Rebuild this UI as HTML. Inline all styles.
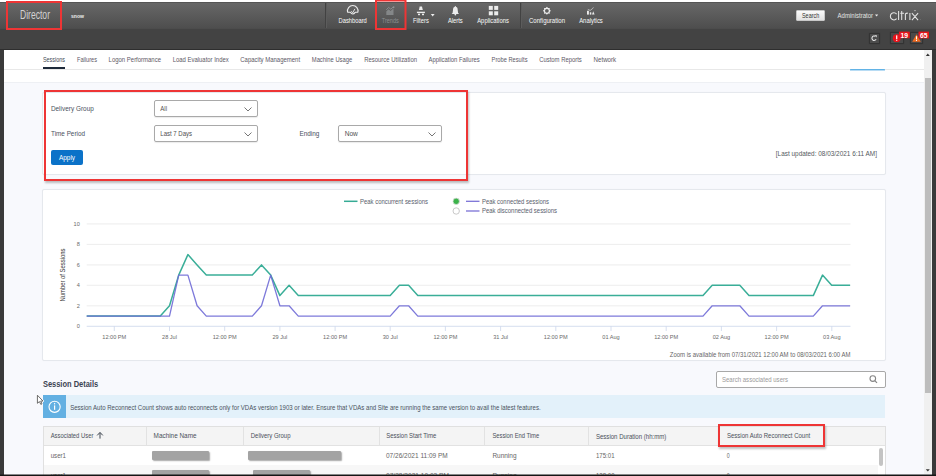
<!DOCTYPE html>
<html><head><meta charset="utf-8">
<style>
*{margin:0;padding:0;box-sizing:border-box}
html,body{width:936px;height:476px;overflow:hidden;background:#f8f9fd;font-family:"Liberation Sans",sans-serif;color:#3c4450}
.a{position:absolute}
#top{left:0;top:0;width:936px;height:2px;background:#fff}
#hb1{left:0;top:2px;width:936px;height:26px;background:linear-gradient(#676767,#4e4e4e);border-top:1px solid #555}
#hb2{left:0;top:28px;width:936px;height:22px;background:#434343;border-top:1px solid #4c4c4c;border-bottom:1px solid #2e2e2e}
#lb{left:0;top:50px;width:4px;height:426px;background:#3a3a3a}
#rb{left:932px;top:50px;width:4px;height:426px;background:#3a3a3a}
#bb{left:0;top:474px;width:936px;height:2px;background:#111}
#sb{left:924px;top:50px;width:8px;height:424px;background:#f0f0f0}
#sbt{left:925px;top:78px;width:6px;height:315px;background:#bdbdbd}
.sep{position:absolute;top:3px;width:2px;height:25px;border-left:1px solid #424242;border-right:1px solid #5c5c5c}
.red{position:absolute;border:2px solid #ee3535;box-shadow:1px 2px 2px rgba(0,0,0,.25)}
.card{position:absolute;background:#fff;border:1px solid #e5e8ed;border-radius:2px;box-shadow:0 0 1px rgba(0,0,0,.05)}
.dd{position:absolute;width:104px;height:17px;border:1px solid #a9a9a9;border-radius:2px;background:#fff;box-shadow:0 1px 1px rgba(0,0,0,.08)}
.dd svg{position:absolute;right:5px;top:6px}
.blur{position:absolute;background:#a3a3a3;border-radius:1px;box-shadow:1px 1px 1.5px rgba(0,0,0,.35)}
.vb{position:absolute;top:427px;width:1px;height:19px;background:#e2e2e2}
</style></head><body>
<div id="top" class="a"></div>
<div id="hb1" class="a"></div>
<div id="hb2" class="a"></div>

<div class="sep" style="left:325px"></div>
<div class="sep" style="left:520px"></div>

<!-- header right -->
<div class="a" style="left:796px;top:10px;width:29px;height:11px;background:linear-gradient(#fbfbfb,#e2e2e2);border:1px solid #c8c8c8;border-radius:1px"></div>
<div class="a" style="left:869px;top:33px;width:11px;height:11px;background:#4c4c4c;border:1px solid #333;border-radius:1px;box-shadow:0 0 1px #2a2a2a"></div>
<div class="a" style="left:890px;top:32px;width:14px;height:12px;background:#4a4a4a;border:1px solid #333;border-radius:1px;box-shadow:0 0 1px #2a2a2a"></div>
<div class="a" style="left:910px;top:32px;width:13px;height:12px;background:#4a4a4a;border:1px solid #333;border-radius:1px;box-shadow:0 0 1px #2a2a2a"></div>

<div id="lb" class="a"></div>
<div id="rb" class="a"></div>
<div id="sb" class="a"></div>
<div id="sbt" class="a"></div>

<!-- content -->
<div class="a" style="left:4px;top:50px;width:920px;height:32px;background:#fff"></div>
<div class="a" style="left:4px;top:69px;width:920px;height:1px;background:#e8e8e8"></div>
<div class="a" style="left:4px;top:82px;width:920px;height:1px;background:#eef0f4"></div>
<div class="a" style="left:850px;top:69px;width:35px;height:1px;background:#62b3e6;border-radius:1px"></div><div class="a" style="left:850px;top:70px;width:35px;height:1px;background:#b8dcf4"></div>
<div class="a" style="left:43px;top:67px;width:22px;height:2px;background:#1e2a3a"></div>

<!-- filter card -->
<div class="card" style="left:42px;top:92px;width:844px;height:83px"></div>
<div class="dd" style="left:154px;top:100px"><svg width="8" height="5" viewBox="0 0 8 5"><path d="M0.5 0.5 L4 4 L7.5 0.5" fill="none" stroke="#666" stroke-width="0.9"/></svg></div>
<div class="dd" style="left:154px;top:124.6px"><svg width="8" height="5" viewBox="0 0 8 5"><path d="M0.5 0.5 L4 4 L7.5 0.5" fill="none" stroke="#666" stroke-width="0.9"/></svg></div>
<div class="dd" style="left:338px;top:124.6px"><svg width="8" height="5" viewBox="0 0 8 5"><path d="M0.5 0.5 L4 4 L7.5 0.5" fill="none" stroke="#666" stroke-width="0.9"/></svg></div>
<div class="a" style="left:51px;top:150px;width:32px;height:15px;background:#0b72c8;border-radius:2px"></div>
<div class="red" style="left:44px;top:90px;width:424px;height:91px"></div>

<!-- chart card -->
<div class="card" style="left:42px;top:189px;width:844px;height:172px"></div>
<svg class="a" style="left:0;top:0" width="936" height="476" viewBox="0 0 936 476">
<line x1="86.7" x2="850.5" y1="305.8" y2="305.8" stroke="#e9e9e9" stroke-width="0.8"/>
<line x1="86.7" x2="850.5" y1="285.3" y2="285.3" stroke="#e9e9e9" stroke-width="0.8"/>
<line x1="86.7" x2="850.5" y1="264.9" y2="264.9" stroke="#e9e9e9" stroke-width="0.8"/>
<line x1="86.7" x2="850.5" y1="244.4" y2="244.4" stroke="#e9e9e9" stroke-width="0.8"/>
<line x1="86.7" x2="850.5" y1="223.9" y2="223.9" stroke="#e9e9e9" stroke-width="0.8"/>
<line x1="86.7" x2="850.5" y1="326.3" y2="326.3" stroke="#ccd6eb" stroke-width="0.8"/>
<line x1="114.3" x2="114.3" y1="326.3" y2="331" stroke="#ccd6eb" stroke-width="0.8"/>
<text x="114.3" y="339" text-anchor="middle" font-size="5.6" fill="#6a6a6a">12:00 PM</text>
<line x1="169.5" x2="169.5" y1="326.3" y2="331" stroke="#ccd6eb" stroke-width="0.8"/>
<text x="169.5" y="339" text-anchor="middle" font-size="5.6" fill="#6a6a6a">28 Jul</text>
<line x1="224.7" x2="224.7" y1="326.3" y2="331" stroke="#ccd6eb" stroke-width="0.8"/>
<text x="224.7" y="339" text-anchor="middle" font-size="5.6" fill="#6a6a6a">12:00 PM</text>
<line x1="279.9" x2="279.9" y1="326.3" y2="331" stroke="#ccd6eb" stroke-width="0.8"/>
<text x="279.9" y="339" text-anchor="middle" font-size="5.6" fill="#6a6a6a">29 Jul</text>
<line x1="335.1" x2="335.1" y1="326.3" y2="331" stroke="#ccd6eb" stroke-width="0.8"/>
<text x="335.1" y="339" text-anchor="middle" font-size="5.6" fill="#6a6a6a">12:00 PM</text>
<line x1="390.2" x2="390.2" y1="326.3" y2="331" stroke="#ccd6eb" stroke-width="0.8"/>
<text x="390.2" y="339" text-anchor="middle" font-size="5.6" fill="#6a6a6a">30 Jul</text>
<line x1="445.4" x2="445.4" y1="326.3" y2="331" stroke="#ccd6eb" stroke-width="0.8"/>
<text x="445.4" y="339" text-anchor="middle" font-size="5.6" fill="#6a6a6a">12:00 PM</text>
<line x1="500.6" x2="500.6" y1="326.3" y2="331" stroke="#ccd6eb" stroke-width="0.8"/>
<text x="500.6" y="339" text-anchor="middle" font-size="5.6" fill="#6a6a6a">31 Jul</text>
<line x1="555.8" x2="555.8" y1="326.3" y2="331" stroke="#ccd6eb" stroke-width="0.8"/>
<text x="555.8" y="339" text-anchor="middle" font-size="5.6" fill="#6a6a6a">12:00 PM</text>
<line x1="611.0" x2="611.0" y1="326.3" y2="331" stroke="#ccd6eb" stroke-width="0.8"/>
<text x="611.0" y="339" text-anchor="middle" font-size="5.6" fill="#6a6a6a">01 Aug</text>
<line x1="666.2" x2="666.2" y1="326.3" y2="331" stroke="#ccd6eb" stroke-width="0.8"/>
<text x="666.2" y="339" text-anchor="middle" font-size="5.6" fill="#6a6a6a">12:00 PM</text>
<line x1="721.4" x2="721.4" y1="326.3" y2="331" stroke="#ccd6eb" stroke-width="0.8"/>
<text x="721.4" y="339" text-anchor="middle" font-size="5.6" fill="#6a6a6a">02 Aug</text>
<line x1="776.6" x2="776.6" y1="326.3" y2="331" stroke="#ccd6eb" stroke-width="0.8"/>
<text x="776.6" y="339" text-anchor="middle" font-size="5.6" fill="#6a6a6a">12:00 PM</text>
<line x1="831.8" x2="831.8" y1="326.3" y2="331" stroke="#ccd6eb" stroke-width="0.8"/>
<text x="831.8" y="339" text-anchor="middle" font-size="5.6" fill="#6a6a6a">03 Aug</text>
<text x="79.8" y="328.3" text-anchor="end" font-size="5.6" fill="#6a6a6a">0</text>
<text x="79.8" y="307.8" text-anchor="end" font-size="5.6" fill="#6a6a6a">2</text>
<text x="79.8" y="287.3" text-anchor="end" font-size="5.6" fill="#6a6a6a">4</text>
<text x="79.8" y="266.9" text-anchor="end" font-size="5.6" fill="#6a6a6a">6</text>
<text x="79.8" y="246.4" text-anchor="end" font-size="5.6" fill="#6a6a6a">8</text>
<text x="79.8" y="225.9" text-anchor="end" font-size="5.6" fill="#6a6a6a">10</text>
<text transform="translate(65,275) rotate(-90)" text-anchor="middle" font-size="6.3" fill="#3a3a3a" textLength="53" lengthAdjust="spacingAndGlyphs">Number of Sessions</text>
<polyline points="86.7,316.1 160.3,316.1 169.5,305.8 178.7,275.1 187.9,254.6 197.1,264.9 206.3,275.1 252.3,275.1 261.5,264.9 270.7,275.1 279.9,295.6 289.1,285.3 298.3,295.6 390.2,295.6 399.4,285.3 408.6,285.3 417.8,295.6 703.0,295.6 712.2,285.3 739.8,285.3 749.0,295.6 813.3,295.6 822.5,275.1 831.7,285.3 850.1,285.3" fill="none" stroke="#3aae98" stroke-width="1.5" stroke-linejoin="round"/>
<polyline points="86.7,316.1 169.5,316.1 178.7,275.1 187.9,275.1 197.1,305.8 206.3,316.1 252.3,316.1 261.5,305.8 270.7,275.1 279.9,305.8 289.1,305.8 298.3,316.1 390.2,316.1 399.4,305.8 408.6,305.8 417.8,316.1 703.0,316.1 712.2,305.8 739.8,305.8 749.0,316.1 813.3,316.1 822.5,305.8 850.1,305.8" fill="none" stroke="#6f6ad6" stroke-width="1.3" stroke-opacity="0.9" stroke-linejoin="round"/>
<line x1="344" x2="357.5" y1="201.3" y2="201.3" stroke="#36ab95" stroke-width="1.5"/>
<circle cx="456.2" cy="201.3" r="3.2" fill="#3bb34a" stroke="#ddd" stroke-width="0.8"/>
<circle cx="456.2" cy="211" r="3.2" fill="#fff" stroke="#bbb" stroke-width="0.8"/>
<line x1="466" x2="479.5" y1="201.3" y2="201.3" stroke="#7b72d6" stroke-width="1.3"/>
<line x1="466" x2="479.5" y1="211" y2="211" stroke="#7b72d6" stroke-width="1.3"/>
</svg>

<!-- session details -->
<div class="a" style="left:716px;top:371px;width:170px;height:17px;background:#fff;border:1px solid #a8a8a8;border-radius:2px"></div>
<div class="a" style="left:43px;top:395px;width:842px;height:23px;background:#e3f1fa"></div>
<div class="a" style="left:43px;top:395px;width:23px;height:23px;background:#63b0e2"></div>

<!-- table -->
<div class="a" style="left:43px;top:426px;width:843px;height:50px;background:#fff;border:1px solid #e0e0e0"></div>
<div class="a" style="left:44px;top:427px;width:841px;height:19px;background:#f4f4f4;border-bottom:1px solid #e2e2e2"></div>
<div class="a" style="left:44px;top:465px;width:834px;height:10px;background:#f7f7f7"></div>
<div class="vb" style="left:146px"></div>
<div class="vb" style="left:243px"></div>
<div class="vb" style="left:379px"></div>
<div class="vb" style="left:484px"></div>
<div class="vb" style="left:588px"></div>
<div class="vb" style="left:718px"></div>
<div class="blur" style="left:152px;top:451px;width:57px;height:9px"></div>
<div class="blur" style="left:248px;top:451px;width:93px;height:9px"></div>
<div class="blur" style="left:152px;top:470px;width:57px;height:9px"></div>
<div class="blur" style="left:253px;top:470px;width:57px;height:9px"></div>
<div class="a" style="left:879px;top:448px;width:4px;height:18px;background:#c4c4c4;border-radius:2px"></div>
<div class="red" style="left:718px;top:424px;width:107px;height:23px"></div>
<svg class="a" style="left:0;top:0;font-family:'Liberation Sans',sans-serif" width="936" height="476" viewBox="0 0 936 476">
<text x="20.00" y="19.00" font-size="12.42" font-weight="normal" fill="#d2d2d2" textLength="30.00" lengthAdjust="spacingAndGlyphs">Director</text>
<text x="71.00" y="17.90" font-size="5.90" font-weight="bold" fill="#ececec" textLength="13.00" lengthAdjust="spacingAndGlyphs">snow</text>
<text x="338.60" y="22.80" font-size="7.42" font-weight="normal" fill="#fafafa" textLength="28.20" lengthAdjust="spacingAndGlyphs">Dashboard</text>
<text x="381.70" y="22.80" font-size="7.42" font-weight="normal" fill="#8c8f91" textLength="17.10" lengthAdjust="spacingAndGlyphs">Trends</text>
<text x="413.00" y="22.80" font-size="7.42" font-weight="normal" fill="#fafafa" textLength="15.80" lengthAdjust="spacingAndGlyphs">Filters</text>
<text x="447.90" y="22.80" font-size="7.42" font-weight="normal" fill="#fafafa" textLength="14.90" lengthAdjust="spacingAndGlyphs">Alerts</text>
<text x="477.20" y="22.80" font-size="7.42" font-weight="normal" fill="#fafafa" textLength="31.70" lengthAdjust="spacingAndGlyphs">Applications</text>
<text x="529.00" y="22.80" font-size="7.42" font-weight="normal" fill="#fafafa" textLength="36.00" lengthAdjust="spacingAndGlyphs">Configuration</text>
<text x="579.20" y="22.80" font-size="7.42" font-weight="normal" fill="#fafafa" textLength="23.60" lengthAdjust="spacingAndGlyphs">Analytics</text>
<text x="802.00" y="17.80" font-size="7.26" font-weight="normal" fill="#333" textLength="17.20" lengthAdjust="spacingAndGlyphs">Search</text>
<text x="837.60" y="17.80" font-size="7.58" font-weight="normal" fill="#e2e2e2" textLength="35.40" lengthAdjust="spacingAndGlyphs">Administrator</text>
<text x="42.90" y="62.00" font-size="7.74" font-weight="normal" fill="#444c58" textLength="22.10" lengthAdjust="spacingAndGlyphs">Sessions</text>
<text x="77.00" y="62.00" font-size="7.74" font-weight="normal" fill="#5d5866" textLength="20.00" lengthAdjust="spacingAndGlyphs">Failures</text>
<text x="108.60" y="62.00" font-size="7.74" font-weight="normal" fill="#5d5866" textLength="52.40" lengthAdjust="spacingAndGlyphs">Logon Performance</text>
<text x="172.70" y="62.00" font-size="7.74" font-weight="normal" fill="#5d5866" textLength="56.00" lengthAdjust="spacingAndGlyphs">Load Evaluator Index</text>
<text x="240.30" y="62.00" font-size="7.74" font-weight="normal" fill="#5d5866" textLength="59.80" lengthAdjust="spacingAndGlyphs">Capacity Management</text>
<text x="311.80" y="62.00" font-size="7.74" font-weight="normal" fill="#5d5866" textLength="40.40" lengthAdjust="spacingAndGlyphs">Machine Usage</text>
<text x="364.20" y="62.00" font-size="7.74" font-weight="normal" fill="#5d5866" textLength="52.80" lengthAdjust="spacingAndGlyphs">Resource Utilization</text>
<text x="428.50" y="62.00" font-size="7.74" font-weight="normal" fill="#5d5866" textLength="51.30" lengthAdjust="spacingAndGlyphs">Application Failures</text>
<text x="491.60" y="62.00" font-size="7.74" font-weight="normal" fill="#5d5866" textLength="35.90" lengthAdjust="spacingAndGlyphs">Probe Results</text>
<text x="539.20" y="62.00" font-size="7.74" font-weight="normal" fill="#5d5866" textLength="42.60" lengthAdjust="spacingAndGlyphs">Custom Reports</text>
<text x="593.50" y="62.00" font-size="7.74" font-weight="normal" fill="#5d5866" textLength="22.70" lengthAdjust="spacingAndGlyphs">Network</text>
<text x="50.90" y="111.40" font-size="7.42" font-weight="normal" fill="#4a5260" textLength="42.90" lengthAdjust="spacingAndGlyphs">Delivery Group</text>
<text x="51.00" y="135.60" font-size="7.42" font-weight="normal" fill="#4a5260" textLength="34.00" lengthAdjust="spacingAndGlyphs">Time Period</text>
<text x="299.40" y="135.80" font-size="7.42" font-weight="normal" fill="#4a5260" textLength="20.00" lengthAdjust="spacingAndGlyphs">Ending</text>
<text x="160.30" y="111.20" font-size="7.42" font-weight="normal" fill="#505050" textLength="6.70" lengthAdjust="spacingAndGlyphs">All</text>
<text x="160.30" y="135.80" font-size="7.42" font-weight="normal" fill="#505050" textLength="31.70" lengthAdjust="spacingAndGlyphs">Last 7 Days</text>
<text x="344.70" y="135.80" font-size="7.42" font-weight="normal" fill="#505050" textLength="13.20" lengthAdjust="spacingAndGlyphs">Now</text>
<text x="58.90" y="159.90" font-size="7.42" font-weight="normal" fill="#ffffff" textLength="16.20" lengthAdjust="spacingAndGlyphs">Apply</text>
<text x="775.80" y="156.20" font-size="7.58" font-weight="normal" fill="#555a60" textLength="101.20" lengthAdjust="spacingAndGlyphs">[Last updated: 08/03/2021 6:11 AM]</text>
<text x="360.00" y="203.60" font-size="7.10" font-weight="normal" fill="#58606c" textLength="68.00" lengthAdjust="spacingAndGlyphs">Peak concurrent sessions</text>
<text x="482.00" y="203.60" font-size="7.10" font-weight="normal" fill="#58606c" textLength="67.00" lengthAdjust="spacingAndGlyphs">Peak connected sessions</text>
<text x="482.00" y="213.30" font-size="7.10" font-weight="normal" fill="#58606c" textLength="75.00" lengthAdjust="spacingAndGlyphs">Peak disconnected sessions</text>
<text x="669.80" y="356.60" font-size="6.94" font-weight="normal" fill="#666" textLength="180.70" lengthAdjust="spacingAndGlyphs">Zoom is available from 07/31/2021 12:00 AM to 08/03/2021 6:00 AM</text>
<text x="42.90" y="387.10" font-size="8.87" font-weight="bold" fill="#3b4452" textLength="55.30" lengthAdjust="spacingAndGlyphs">Session Details</text>
<text x="722.00" y="381.90" font-size="7.26" font-weight="normal" fill="#9a9a9a" textLength="66.00" lengthAdjust="spacingAndGlyphs">Search associated users</text>
<text x="70.20" y="409.80" font-size="7.58" font-weight="normal" fill="#4a5260" textLength="470.50" lengthAdjust="spacingAndGlyphs">Session Auto Reconnect Count shows auto reconnects only for VDAs version 1903 or later. Ensure that VDAs and Site are running the same version to avail the latest features.</text>
<text x="50.70" y="437.80" font-size="7.74" font-weight="normal" fill="#4a505a" textLength="42.70" lengthAdjust="spacingAndGlyphs">Associated User</text>
<text x="153.60" y="437.80" font-size="7.74" font-weight="normal" fill="#4a505a" textLength="42.90" lengthAdjust="spacingAndGlyphs">Machine Name</text>
<text x="250.80" y="437.80" font-size="7.74" font-weight="normal" fill="#4a505a" textLength="39.70" lengthAdjust="spacingAndGlyphs">Delivery Group</text>
<text x="386.30" y="437.80" font-size="7.74" font-weight="normal" fill="#4a505a" textLength="49.90" lengthAdjust="spacingAndGlyphs">Session Start Time</text>
<text x="492.40" y="437.80" font-size="7.74" font-weight="normal" fill="#4a505a" textLength="46.80" lengthAdjust="spacingAndGlyphs">Session End Time</text>
<text x="595.90" y="439.00" font-size="7.74" font-weight="normal" fill="#4a505a" textLength="70.50" lengthAdjust="spacingAndGlyphs">Session Duration (hh:mm)</text>
<text x="727.00" y="437.60" font-size="7.74" font-weight="normal" fill="#4a505a" textLength="83.20" lengthAdjust="spacingAndGlyphs">Session Auto Reconnect Count</text>
<text x="50.70" y="457.80" font-size="7.42" font-weight="normal" fill="#666" textLength="15.30" lengthAdjust="spacingAndGlyphs">user1</text>
<text x="386.00" y="457.80" font-size="7.42" font-weight="normal" fill="#666" textLength="61.80" lengthAdjust="spacingAndGlyphs">07/26/2021 11:09 PM</text>
<text x="492.40" y="457.80" font-size="7.42" font-weight="normal" fill="#666" textLength="24.10" lengthAdjust="spacingAndGlyphs">Running</text>
<text x="596.00" y="457.80" font-size="7.42" font-weight="normal" fill="#666" textLength="18.50" lengthAdjust="spacingAndGlyphs">175:01</text>
<text x="726.70" y="457.80" font-size="7.42" font-weight="normal" fill="#666" textLength="2.90" lengthAdjust="spacingAndGlyphs">0</text>
<text x="50.70" y="477.60" font-size="7.42" font-weight="normal" fill="#666" textLength="15.30" lengthAdjust="spacingAndGlyphs">user1</text>
<text x="386.00" y="477.60" font-size="7.42" font-weight="normal" fill="#666" textLength="63.00" lengthAdjust="spacingAndGlyphs">07/28/2021 10:03 PM</text>
<text x="492.40" y="477.60" font-size="7.42" font-weight="normal" fill="#666" textLength="24.10" lengthAdjust="spacingAndGlyphs">Running</text>
<text x="596.00" y="477.60" font-size="7.42" font-weight="normal" fill="#666" textLength="18.50" lengthAdjust="spacingAndGlyphs">128:00</text>
<text x="726.70" y="477.60" font-size="7.42" font-weight="normal" fill="#666" textLength="2.90" lengthAdjust="spacingAndGlyphs">0</text>
</svg>
<svg class="a" style="left:0;top:0" width="936" height="476" viewBox="0 0 936 476">
<rect x="7" y="2" width="54" height="27" fill="none" stroke="#ee3535" stroke-width="2"/>
<path d="M347.6,12.1 A5.3,5.3 0 1 1 357.9,12.1 L355.2,12.3 Q352.7,15.6 350.3,12.3 Z" fill="none" stroke="#ececec" stroke-width="1.1" stroke-linejoin="round"/>
<path d="M351.3,11.2 L352.7,12.8 L354.9,8.9" fill="none" stroke="#ececec" stroke-width="0.9"/>
<path d="M386.3,15 V11.6 L388.5,9.3 L390.6,11 L393.5,8.2 V15 Z" fill="#8f9294" fill-opacity="0.8"/>
<path d="M386.3,9.8 L388.6,7.4 L390.8,9.2 L393,7.2" fill="none" stroke="#8f9294" stroke-width="0.9"/>
<circle cx="393.6" cy="7.2" r="0.9" fill="#8f9294"/>
<rect x="376" y="0.5" width="29.5" height="28.5" fill="none" stroke="#ee3535" stroke-width="2"/>
<path d="M419.7,6.6 H422 L422.8,10 H418.9 Z" fill="#ececec"/>
<rect x="416.9" y="11.7" width="8" height="1.4" fill="#ececec"/>
<rect x="418" y="13.7" width="2" height="1.5" fill="#ececec"/><rect x="422" y="13.7" width="2" height="1.5" fill="#ececec"/>
<path d="M430.8,14 H434.6 L432.7,16.4 Z" fill="#ececec"/>
<path d="M451.6,14 Q453,13 453,10 Q453,6.8 455.35,6.8 Q457.7,6.8 457.7,10 Q457.7,13 459.1,14 Z" fill="#ececec"/>
<circle cx="455.35" cy="14.6" r="0.9" fill="#ececec"/>
<circle cx="455.35" cy="6.6" r="0.6" fill="#ececec"/>
<rect x="488.8" y="5.9" width="4" height="4" fill="#ececec"/>
<rect x="488.8" y="11.3" width="4" height="4" fill="#ececec"/>
<rect x="494.2" y="5.9" width="4" height="4" fill="#ececec"/>
<rect x="494.2" y="11.3" width="4" height="4" fill="#ececec"/>
<path d="M550.90,10.80 L549.67,11.95 L549.73,13.63 L548.05,13.57 L546.90,14.80 L545.75,13.57 L544.07,13.63 L544.13,11.95 L542.90,10.80 L544.13,9.65 L544.07,7.97 L545.75,8.03 L546.90,6.80 L548.05,8.03 L549.73,7.97 L549.67,9.65 Z M546.9,8.9 A1.9,1.9 0 1 0 546.9,12.7 A1.9,1.9 0 1 0 546.9,8.9 Z" fill="#ececec" fill-rule="evenodd"/>
<rect x="587" y="10.8" width="1.9" height="3.8" fill="#ececec"/>
<rect x="589.8" y="12.3" width="1.5" height="2.3" fill="#ececec"/>
<path d="M592,14.6 L593.2,11.2 L594.6,14.6 Z" fill="#ececec"/>
<path d="M587.8,9.4 L590.2,10.4 L592.6,8.6 L593.4,7.4" fill="none" stroke="#ececec" stroke-width="0.75" stroke-opacity="0.8"/>
<path d="M875,14.6 H878.2 L876.6,16.6 Z" fill="#ececec"/>
<path d="M896.6,14.1 A3.5,3.6 0 1 0 896.6,18.6" fill="none" stroke="#e4e4e4" stroke-width="1.05"/>
<path d="M898.6,10.9 V20.1 M901.7,10.9 V20.1 M900.3,13.3 H904 M905.4,20.1 V13.8 Q906,13.1 907.8,13.1 M909.9,13.1 V20.1 M911.9,13.1 L918.1,20.1 M918.1,13.1 L911.9,20.1" fill="none" stroke="#e4e4e4" stroke-width="1.05"/>
<circle cx="915" cy="10.6" r="0.6" fill="#e4e4e4"/><circle cx="920.3" cy="19.7" r="0.35" fill="#999"/>
<path d="M875.2,36.3 A2.2,2.2 0 1 0 876.1,39.2" fill="none" stroke="#e8e8e8" stroke-width="1.05"/>
<path d="M874.5,35.3 L876.9,35.3 L876.5,37.6 Z" fill="#e8e8e8"/>
<circle cx="896.7" cy="38.2" r="3.9" fill="#e8141c"/>
<rect x="896.1" y="35.4" width="1.2" height="3.6" fill="#fff"/><rect x="896.1" y="39.7" width="1.2" height="1.1" fill="#fff"/>
<rect x="898.9" y="31.6" width="10.9" height="6.6" fill="#e8141c"/>
<text x="904.35" y="37.6" font-size="6.8" font-weight="bold" fill="#fff" text-anchor="middle" font-family="Liberation Sans">19</text>
<path d="M916.5,34.2 L920.8,41.8 H912.2 Z" fill="#f26b21"/>
<rect x="916" y="36.2" width="1" height="3.2" fill="#fff"/><rect x="916" y="40" width="1" height="1" fill="#fff"/>
<rect x="918.5" y="31.6" width="10.5" height="6.8" fill="#e8141c"/>
<text x="923.75" y="37.7" font-size="6.8" font-weight="bold" fill="#fff" text-anchor="middle" font-family="Liberation Sans">65</text>
<circle cx="872.8" cy="378.6" r="2.8" fill="none" stroke="#858585" stroke-width="1.1"/><path d="M874.8,380.6 L877,382.8" stroke="#858585" stroke-width="1.2"/>
<circle cx="54.6" cy="406.8" r="5.6" fill="none" stroke="#fff" stroke-width="1.1"/>
<rect x="54" y="405.4" width="1.2" height="4.4" fill="#fff"/><circle cx="54.6" cy="403.7" r="0.7" fill="#fff"/>
<path d="M100,438.6 V432.8 M97.2,435.4 L100,432.4 L102.8,435.4" fill="none" stroke="#3e4650" stroke-width="1"/>
<path d="M37.4,395.2 L37.4,403.3 L39.4,401.6 L40.8,404.4 L42,403.8 L40.7,401.1 L43,401 Z" fill="#fff" stroke="#fff" stroke-width="2" stroke-linejoin="round"/>
<path d="M37.4,395.2 L37.4,403.3 L39.4,401.6 L40.8,404.4 L42,403.8 L40.7,401.1 L43,401 Z" fill="#fff" stroke="#5a5a5a" stroke-width="0.9" stroke-linejoin="round"/>
<path d="M925.8,56 H929.8 L927.8,53.6 Z" fill="#333"/>
<path d="M925.8,469.2 H929.8 L927.8,471.6 Z" fill="#333"/>
</svg>
<svg class="a" style="left:0;top:0" width="936" height="476"><rect x="0" y="474.5" width="936" height="2" fill="#161616"/></svg>
</body></html>
